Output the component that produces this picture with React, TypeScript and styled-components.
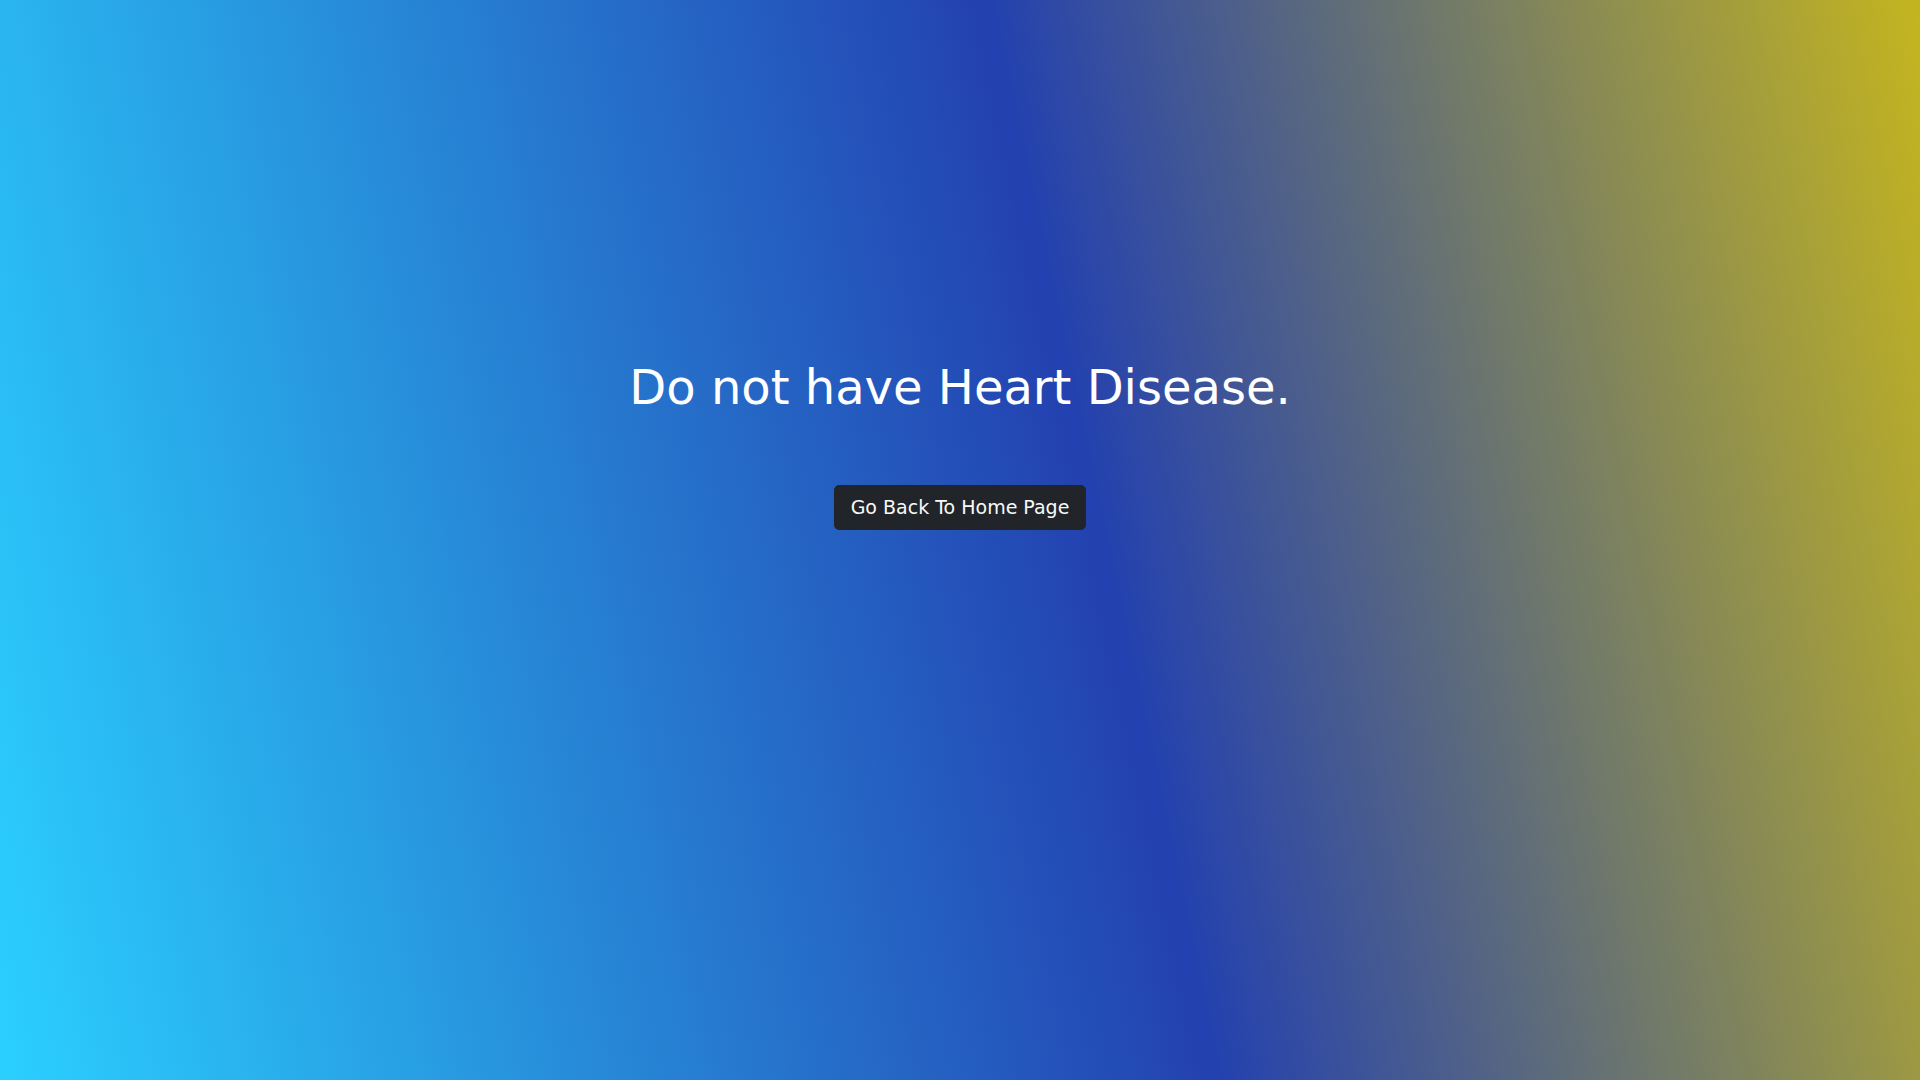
import React from 'react'
import styled, { createGlobalStyle } from 'styled-components'

const GlobalStyle = createGlobalStyle`
  html, body {
    margin: 0;
    padding: 0;
  }
  body {
    font-family: 'DejaVu Sans', 'Liberation Sans', sans-serif;
  }
  * {
    box-sizing: border-box;
  }
`

const Page = styled.main`
  min-height: 100vh;
  display: flex;
  flex-direction: column;
  align-items: center;
  padding-top: 359px;
  background: linear-gradient(
    78deg,
    #2bd0ff 0%,
    #2341b0 56.5%,
    #c4b51f 100%
  );
`

const ResultTitle = styled.h1`
  margin: 0 0 68px;
  font-size: 48px;
  font-weight: 400;
  line-height: 1.2;
  color: #ffffff;
  text-align: center;
`

const HomeButton = styled.button`
  display: inline-block;
  padding: 8px 16px;
  font-family: 'DejaVu Sans', sans-serif;
  font-size: 19px;
  line-height: 27px;
  color: #f8f9fa;
  background: #212529;
  border: 1px solid #212529;
  border-radius: 5px;
  cursor: pointer;
  &:hover {
    background: #1c1f23;
  }
`

export default function App() {
  return (
    <>
      <GlobalStyle />
      <Page>
        <ResultTitle>Do not have Heart Disease.</ResultTitle>
        <HomeButton type="button">Go Back To Home Page</HomeButton>
      </Page>
    </>
  )
}
